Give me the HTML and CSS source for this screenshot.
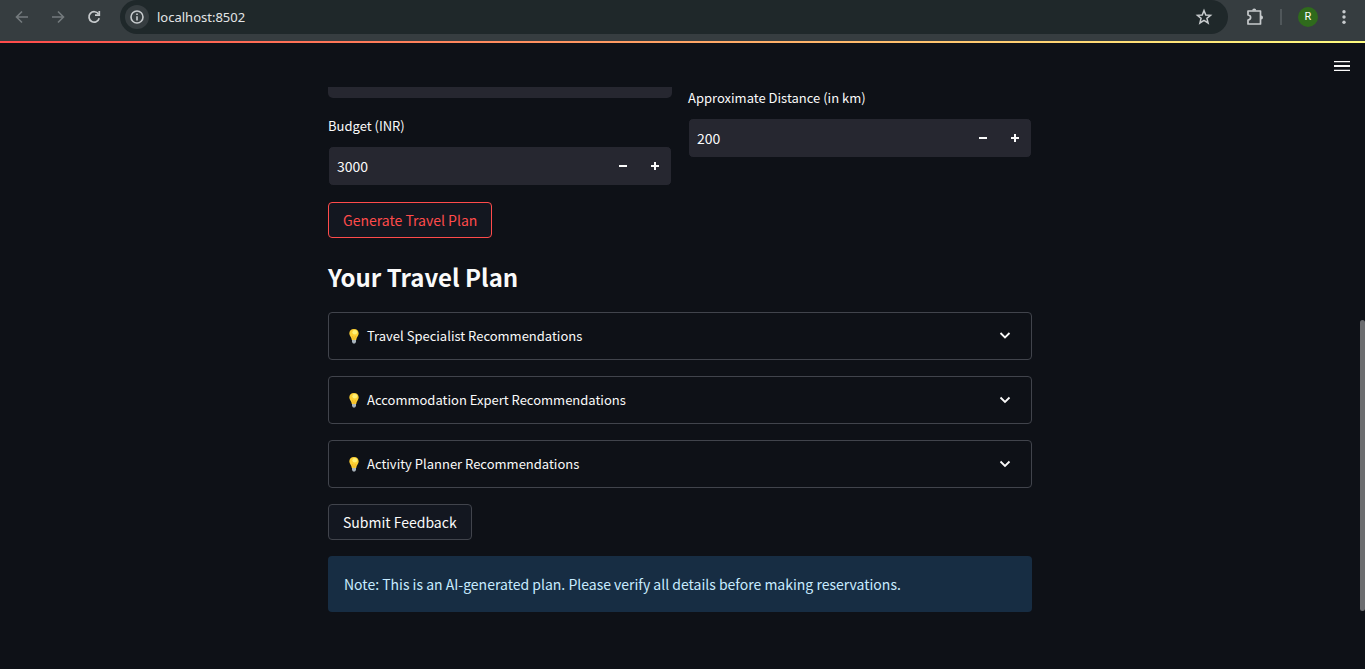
FILE: index.html
```html
<!DOCTYPE html>
<html lang="en">
<head>
<meta charset="utf-8">
<title>Travel Planner</title>
<link rel="stylesheet" href="styles.css">
</head>
<body>
<header class="browser-bar">
  <nav class="browser-nav" aria-label="Browser">
    <button class="icon-button dim" aria-label="Back"><svg width="16" height="16" viewBox="0 0 16 16" fill="none" stroke="currentColor" stroke-width="1.6"><path d="M14 8H3M8 2.500L2.500 8L8 13.500"/></svg></button>
    <button class="icon-button dim" aria-label="Forward"><svg width="16" height="16" viewBox="0 0 16 16" fill="none" stroke="currentColor" stroke-width="1.6"><path d="M2 8H13M8 2.500L13.500 8L8 13.500"/></svg></button>
    <button class="icon-button" aria-label="Reload"><svg width="16" height="16" viewBox="0 0 16 16" fill="none" stroke="currentColor" stroke-width="1.700"><path d="M12.500 5A5.200 5.200 0 1 0 13.200 9.300"/><path d="M13.300 2V6.200H9"/></svg></button>
  </nav>
  <div class="address">
    <button class="site-info" aria-label="Site information"><svg width="16" height="16" viewBox="0 0 16 16" fill="none" stroke="currentColor" stroke-width="1.600"><circle cx="8" cy="8" r="6"/><path d="M8 7.200V11.500M8 4.500V6.100"/></svg></button>
    <input class="url" type="text" value="localhost:8502" aria-label="Address">
    <button class="icon-button" aria-label="Bookmark"><svg width="18" height="18" viewBox="0 0 18 18" fill="none" stroke="currentColor" stroke-width="1.500"><path d="M9 2.600L10.800 7L15.500 7.300L11.900 10.300L13.100 15L9 12.400L4.900 15L6.100 10.300L2.500 7.300L7.200 7Z"/></svg></button>
  </div>
  <div class="browser-tools">
    <button class="icon-button" aria-label="Extensions"><svg width="18" height="18" viewBox="0 0 18 18" fill="none" stroke="currentColor" stroke-width="1.700" stroke-linejoin="round"><path d="M2 3H14.500V16H2V12C5.500 11.500 5.500 7.500 2 7Z"/><path d="M6.200 2.500A2 2 0 0 1 10.200 2.500ZM15 7.500A2 2 0 0 1 15 11.500Z" fill="currentColor" stroke="none"/></svg></button>
    <span class="divider"></span>
    <button class="avatar" aria-label="Profile">R</button>
    <button class="icon-button" aria-label="More"><svg width="16" height="16" viewBox="0 0 16 16" fill="currentColor"><circle cx="8" cy="2.700" r="1.700"/><circle cx="8" cy="8" r="1.700"/><circle cx="8" cy="13.300" r="1.700"/></svg></button>
  </div>
</header>
<div class="accent"></div>
<div class="app-header">
  <button class="icon-button menu" aria-label="Main menu"><svg width="16" height="16" viewBox="0 0 16 16" fill="currentColor"><path d="M0 3H16V4.300H0ZM0 7.100H16V8.900H0ZM0 11.700H16V13H0Z"/></svg></button>
</div>
<div class="viewport">
  <main class="content">
    <div class="columns">
      <div class="column">
        <div class="field-end"></div>
        <div>
          <label class="label" for="budget">Budget (INR)</label>
          <div class="number">
            <input class="number-input" id="budget" type="text" inputmode="numeric" value="3000">
            <button class="step" aria-label="Decrease budget"><svg width="10" height="10" viewBox="0 0 10 10"><path d="M1 4H9V6H1Z" fill="currentColor"/></svg></button>
            <button class="step" aria-label="Increase budget"><svg width="10" height="10" viewBox="0 0 10 10"><path d="M1 4H4V1H6V4H9V6H6V9H4V6H1Z" fill="currentColor"/></svg></button>
          </div>
        </div>
      </div>
      <div class="column">
        <div>
          <label class="label" for="distance">Approximate Distance (in km)</label>
          <div class="number">
            <input class="number-input" id="distance" type="text" inputmode="numeric" value="200">
            <button class="step" aria-label="Decrease distance"><svg width="10" height="10" viewBox="0 0 10 10"><path d="M1 4H9V6H1Z" fill="currentColor"/></svg></button>
            <button class="step" aria-label="Increase distance"><svg width="10" height="10" viewBox="0 0 10 10"><path d="M1 4H4V1H6V4H9V6H6V9H4V6H1Z" fill="currentColor"/></svg></button>
          </div>
        </div>
      </div>
    </div>
    <button class="button primary">Generate Travel Plan</button>
    <h2 class="title">Your Travel Plan</h2>
    <details class="expander">
      <summary class="summary"><svg class="bulb" width="10" height="15" viewBox="0 0 10 15"><path d="M5 0C2 0 .3 2 .3 4.600C.3 7 2.500 8 2.800 11H7.200C7.500 8 9.700 7 9.700 4.600C9.700 2 8 0 5 0Z" fill="#fdd033"/><ellipse cx="5.800" cy="3.300" rx="2.400" ry="2.200" fill="#fff176"/><path d="M3.500 7L4.500 10.500M6.500 7L5.500 10.500" stroke="#e8a51c" stroke-width=".6"/><path d="M3 11H7V13L6 14.500H4L3 13Z" fill="#a9b4bc"/></svg><span class="summary-text">Travel Specialist Recommendations</span><svg width="12" height="12" viewBox="0 0 12 12" fill="none" stroke="currentColor" stroke-width="1.800"><path d="M1.500 3L6 7.500L10.500 3"/></svg></summary>
    </details>
    <details class="expander">
      <summary class="summary"><svg class="bulb" width="10" height="15" viewBox="0 0 10 15"><path d="M5 0C2 0 .3 2 .3 4.600C.3 7 2.500 8 2.800 11H7.200C7.500 8 9.700 7 9.700 4.600C9.700 2 8 0 5 0Z" fill="#fdd033"/><ellipse cx="5.800" cy="3.300" rx="2.400" ry="2.200" fill="#fff176"/><path d="M3.500 7L4.500 10.500M6.500 7L5.500 10.500" stroke="#e8a51c" stroke-width=".6"/><path d="M3 11H7V13L6 14.500H4L3 13Z" fill="#a9b4bc"/></svg><span class="summary-text">Accommodation Expert Recommendations</span><svg width="12" height="12" viewBox="0 0 12 12" fill="none" stroke="currentColor" stroke-width="1.800"><path d="M1.500 3.500L6 8L10.500 3.500"/></svg></summary>
    </details>
    <details class="expander">
      <summary class="summary"><svg class="bulb" width="10" height="15" viewBox="0 0 10 15"><path d="M5 0C2 0 .3 2 .3 4.600C.3 7 2.500 8 2.800 11H7.200C7.500 8 9.700 7 9.700 4.600C9.700 2 8 0 5 0Z" fill="#fdd033"/><ellipse cx="5.800" cy="3.300" rx="2.400" ry="2.200" fill="#fff176"/><path d="M3.500 7L4.500 10.500M6.500 7L5.500 10.500" stroke="#e8a51c" stroke-width=".6"/><path d="M3 11H7V13L6 14.500H4L3 13Z" fill="#a9b4bc"/></svg><span class="summary-text">Activity Planner Recommendations</span><svg width="12" height="12" viewBox="0 0 12 12" fill="none" stroke="currentColor" stroke-width="1.800"><path d="M1.500 3.500L6 8L10.500 3.500"/></svg></summary>
    </details>
    <button class="button">Submit Feedback</button>
    <p class="note">Note: This is an AI-generated plan. Please verify all details before making reservations.</p>
  </main>
</div>
<div class="scroll-thumb"></div>
</body>
</html>
```
FILE: styles.css
```css
* { box-sizing: border-box; }
body {
  margin: 0;
  min-height: 100vh;
  background: #0e1117;
  color: #fafafa;
  font-family: "Noto Sans CJK SC", "Noto Sans", sans-serif;
  font-size: 14px;
  line-height: 24px;
}
button, input { font: inherit; color: inherit; }
button { padding: 0; border: 0; background: none; }
svg { display: block; flex: none; }

.browser-bar {
  display: flex;
  align-items: center;
  height: 41px;
  padding: 0 13px 7px 14px;
  background: #363d40;
  color: #c7cbcd;
}
.browser-nav { display: flex; gap: 20px; margin-right: 18px; }
.icon-button { display: grid; place-items: center; flex: none; }
.dim { color: #747a7d; }
.address {
  display: flex;
  flex: 1;
  align-items: center;
  height: 34px;
  padding: 0 15px 0 5px;
  border-radius: 17px;
  background: #1f282a;
}
.site-info {
  display: grid;
  place-items: center;
  width: 24px;
  height: 24px;
  border-radius: 50%;
  background: #363d40;
}
.url {
  flex: 1;
  min-width: 0;
  padding: 0 8px;
  border: 0;
  background: none;
  color: #e3e5e6;
  font-family: "Noto Sans", sans-serif;
  font-size: 13px;
}
.browser-tools { display: flex; align-items: center; margin-left: 18px; }
.divider { width: 2px; height: 16px; margin: 0 16px; background: #50575a; }
.avatar {
  width: 20px;
  height: 20px;
  margin-right: 18px;
  border-radius: 50%;
  background: #2f6b1c;
  color: #ffffff;
  font-family: Roboto, sans-serif;
  font-size: 11px;
  line-height: 20px;
}
.accent { height: 2px; background: linear-gradient(90deg, #ff4b4b, #fffd80); }
.app-header {
  display: flex;
  justify-content: flex-end;
  height: 44px;
  padding: 2px 15px 0;
}

.viewport { overflow: hidden; padding: 0 5px 56px 0; }
.content {
  display: flex;
  flex-direction: column;
  align-items: flex-start;
  gap: 16px;
  max-width: 704px;
  margin: -1px auto 0;
}
.columns { display: flex; gap: 16px; width: 100%; }
.column { display: flex; flex: 1; flex-direction: column; gap: 16px; min-width: 0; }
.field-end { height: 12px; border-radius: 0 0 5px 5px; background: #262730; }
.label { display: block; margin-bottom: 8px; font-size: 13px; }
.number {
  display: flex;
  height: 40px;
  border: 1px solid #0e1117;
  border-radius: 5px;
  background: #262730;
}
.number-input { flex: 1; min-width: 0; padding: 0 8px; border: 0; background: none; }
.step { display: grid; place-items: center; width: 32px; }
.button {
  height: 36px;
  padding: 0 14px;
  border: 1px solid #41444c;
  border-radius: 4px;
  background: #131720;
}
.primary { border-color: #ff4b4b; color: #ff4b4b; }
.title { margin: 0; padding: 6px 0 2px; font-size: 24px; font-weight: 700; line-height: 34px; }
.expander { width: 100%; border: 1px solid #41444c; border-radius: 4px; }
.summary {
  display: flex;
  align-items: center;
  height: 46px;
  padding: 0 20px;
  font-size: 13px;
  list-style: none;
}
.summary-text { flex: 1; margin-left: 8px; }
.note {
  width: 100%;
  margin: 0;
  padding: 16px;
  border-radius: 4px;
  background: #172d43;
  color: #c7ebff;
}
.scroll-thumb {
  position: fixed;
  right: 0;
  top: 320px;
  width: 5px;
  height: 291px;
  border-radius: 3px;
  background: #6c6d70;
}
```
